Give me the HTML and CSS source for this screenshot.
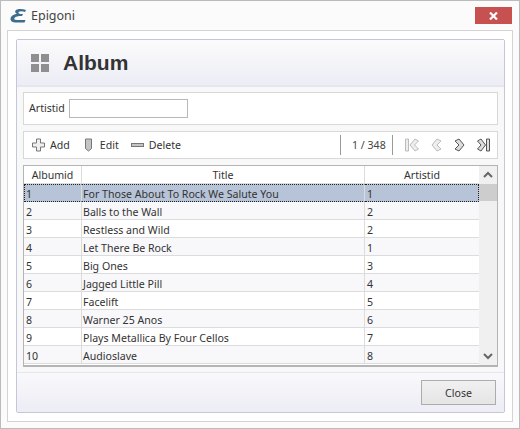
FILE: index.html
```html
<!DOCTYPE html>
<html lang="en">
<head>
    <meta charset="UTF-8">
    <title>Epigoni</title>
    <link rel="stylesheet" href="styles.css">
</head>
<body>
    <div class="window">
        <div class="titlebar">
            <svg class="app-logo" width="16" height="16" viewBox="0 0 16 16">
                <path d="M16 2 C12 0.5 7 0.5 5.5 2.5 C4.7 3.8 5.5 5.2 7 5.8 C3.5 6.3 0.5 8.5 0.5 11 C0.5 13.5 3 14.5 6 14.5 L14.5 14.5 L15.5 12 L7 12 C4.5 12 3.8 11 4.5 10 C5.5 8.5 8 8 12 8 L13 6 L10 6 C8.5 5.5 8 4.5 8.8 3.8 C10 3 13 3 15 4 Z" fill="#3d6c8c"/>
            </svg>
            <span class="app-name">Epigoni</span>
            <button class="close-x" type="button">
                <svg width="9" height="8" viewBox="0 0 9 8"><path d="M1 0.5 L8 7.5 M8 0.5 L1 7.5" stroke="#fff" stroke-width="2.2" fill="none"/></svg>
            </button>
        </div>
        <div class="client">
            <div class="card">
                <div class="card-header">
                    <span class="tiles"><i></i><i></i><i></i><i></i></span>
                    <h1>Album</h1>
                </div>
                <div class="card-body">
                    <div class="box filter">
                        <label for="artistid">Artistid</label>
                        <input type="text" id="artistid">
                    </div>
                    <div class="box toolbar">
                        <span class="tool">
                            <svg width="13" height="14" viewBox="0 0 13 14"><path d="M4.5 1 H8.5 V5 H12.5 V9 H8.5 V13 H4.5 V9 H0.5 V5 H4.5 Z" fill="#f0f0f0" stroke="#777"/></svg>
                            Add
                        </span>
                        <span class="tool">
                            <svg width="11" height="14" viewBox="0 0 11 14"><path d="M1.5 1 H7.5 V10.5 L4.5 13 L1.5 10.5 Z" fill="#c4c4c4" stroke="#777"/></svg>
                            Edit
                        </span>
                        <span class="tool">
                            <svg width="13" height="14" viewBox="0 0 13 14"><rect x="0.5" y="5.5" width="12" height="3" fill="#c4c4c4" stroke="#777"/></svg>
                            Delete
                        </span>
                        <span class="pager">
                            <span class="pos">1 / 348</span>
                            <svg width="14" height="14" viewBox="0 0 14 14"><path d="M0.5 1 H3.5 V13 H0.5 Z M10 1 L13.5 3 L9.5 7 L13.5 11 L10 13 L5 7 Z" fill="#eee" stroke="#bbb"/></svg>
                            <svg width="11" height="14" viewBox="0 0 11 14"><path d="M6 1 L10 3 L6 7 L10 11 L6 13 L1 7 Z" fill="#eee" stroke="#bbb"/></svg>
                            <svg width="11" height="14" viewBox="0 0 11 14"><path d="M5 1 L1 3 L5 7 L1 11 L5 13 L10 7 Z" fill="#ddd" stroke="#555"/></svg>
                            <svg width="13" height="14" viewBox="0 0 13 14"><path d="M4 1 L0.5 3 L4 7 L0.5 11 L4 13 L8.5 7 Z M9.5 1 H12.5 V13 H9.5 Z" fill="#ddd" stroke="#555"/></svg>
                        </span>
                    </div>
                    <div class="grid">
                        <div class="rows">
                            <table>
                                <colgroup><col class="col-id"><col class="col-title"><col class="col-artist"></colgroup>
                                <thead>
                                    <tr><th>Albumid</th><th>Title</th><th>Artistid</th></tr>
                                </thead>
                                <tbody>
                                    <tr class="selected"><td>1</td><td>For Those About To Rock We Salute You</td><td>1</td></tr>
                                    <tr><td>2</td><td>Balls to the Wall</td><td>2</td></tr>
                                    <tr><td>3</td><td>Restless and Wild</td><td>2</td></tr>
                                    <tr><td>4</td><td>Let There Be Rock</td><td>1</td></tr>
                                    <tr><td>5</td><td>Big Ones</td><td>3</td></tr>
                                    <tr><td>6</td><td>Jagged Little Pill</td><td>4</td></tr>
                                    <tr><td>7</td><td>Facelift</td><td>5</td></tr>
                                    <tr><td>8</td><td>Warner 25 Anos</td><td>6</td></tr>
                                    <tr><td>9</td><td>Plays Metallica By Four Cellos</td><td>7</td></tr>
                                    <tr><td>10</td><td>Audioslave</td><td>8</td></tr>
                                </tbody>
                            </table>
                        </div>
                        <div class="scrollbar">
                            <svg width="18" height="18" viewBox="0 0 18 18"><path d="M5 11 L9 7 L13 11" stroke="#666" stroke-width="2" fill="none"/></svg>
                            <div class="thumb"></div>
                            <svg class="down" width="18" height="18" viewBox="0 0 18 18"><path d="M5 7 L9 11 L13 7" stroke="#666" stroke-width="2" fill="none"/></svg>
                        </div>
                    </div>
                </div>
                <div class="card-footer">
                    <button class="close-btn" type="button">Close</button>
                </div>
            </div>
        </div>
    </div>
</body>
</html>
```

FILE: styles.css
```css
/* Desktop style dialog */
* {
    box-sizing: border-box;
}

body {
    margin: 0;
    font-family: "Noto Sans", Arial, sans-serif;
    font-size: 10.6px;
    color: #333;
    background-color: #fbfbfb;
}

.window {
    width: 520px;
    height: 429px;
    border: 1px solid #bbb;
    padding: 0 6px 6px 6px;
    background-color: #fbfbfb;
    display: flex;
    flex-direction: column;
}

.titlebar {
    height: 29px;
    flex-shrink: 0;
    display: flex;
    align-items: center;
    padding: 0 1px 0 3px;
}

.app-logo {
    margin-right: 5px;
}

.app-name {
    font-size: 12.5px;
    color: #444;
}

.close-x {
    margin-left: auto;
    width: 37px;
    height: 17px;
    border: none;
    padding: 0;
    background-color: #c75050;
    display: flex;
    align-items: center;
    justify-content: center;
}

.client {
    flex: 1;
    border: 1px solid #d4d4d4;
    background-color: #fff;
    padding: 8px;
    display: flex;
}

.card {
    flex: 1;
    border: 1px solid #c3c7d9;
    border-radius: 2px;
    background-color: #f8f8f8;
    display: flex;
    flex-direction: column;
}

.card-header {
    height: 47px;
    flex-shrink: 0;
    display: flex;
    align-items: center;
    padding-left: 14px;
    background: linear-gradient(#fbfbfc, #ecedf5);
    border-bottom: 2px solid #e4e6f2;
}

.tiles {
    display: grid;
    grid-template-columns: 8px 8px;
    gap: 2px;
    margin-right: 14px;
}

.tiles i {
    height: 8px;
    background-color: #8f8f8f;
}

h1 {
    margin: 0;
    font-family: "Liberation Sans", Arial, sans-serif;
    font-size: 21px;
    font-weight: bold;
    color: #333;
}

.card-body {
    flex: 1;
    padding: 5px 6px 4px 6px;
    display: flex;
    flex-direction: column;
}

.box {
    border: 1px solid #d8d8d8;
    background-color: #fff;
    display: flex;
    align-items: center;
}

.filter {
    height: 33px;
    padding-left: 5px;
    margin-bottom: 6px;
}

.filter label {
    width: 40px;
    margin-bottom: 2px;
}

.filter input {
    width: 119px;
    height: 19px;
    border: 1px solid #b8b8b8;
    margin: 0;
    outline: none;
}

.toolbar {
    height: 28px;
    padding: 0 7px 1px 8px;
    margin-bottom: 6px;
}

.tool {
    display: flex;
    align-items: center;
    gap: 5px;
    margin-right: 12px;
}

.tool:first-child {
    margin-right: 14px;
}

.pager {
    margin-left: auto;
    display: flex;
    align-items: center;
    gap: 12px;
}

.pos {
    width: 53px;
    height: 20px;
    line-height: 20px;
    padding-left: 11px;
    white-space: nowrap;
    border-left: 1px solid #999;
    border-right: 1px solid #999;
    color: #444;
}

.grid {
    height: 202px;
    border: 1px solid #b4b4b4;
    border-bottom-width: 2px;
    background-color: #fff;
    display: flex;
}

.rows {
    width: 455px;
    overflow: hidden;
}

table {
    width: 455px;
    table-layout: fixed;
    border-collapse: separate;
    border-spacing: 0;
}

.col-id {
    width: 58px;
}

.col-title {
    width: 283px;
}

th {
    height: 18px;
    padding: 1px 0 0;
    font-weight: normal;
    text-align: center;
    border-right: 1px solid #dcdcdc;
    border-bottom: 1px solid #dcdcdc;
}

td {
    height: 18px;
    padding: 2px 1px 0;
    white-space: nowrap;
    border-right: 1px solid #dcdcdc;
    border-bottom: 1px solid #dcdcdc;
}

td:first-child,
td:last-child {
    padding-left: 2px;
}

th:last-child,
td:last-child {
    border-right: none;
}

tr:nth-child(even) td {
    background-color: #f8f8fb;
}

tr.selected td {
    background-color: #b7c3d7;
    border-top: 1px dotted #222;
    border-bottom: 1px dotted #222;
    padding-top: 1px;
}

tr.selected td:first-child {
    border-left: 1px dotted #222;
    padding-left: 1px;
}

tr.selected td:last-child {
    border-right: 1px dotted #222;
}

.scrollbar {
    flex: 1;
    background-color: #f0f0f0;
    display: flex;
    flex-direction: column;
}

.thumb {
    height: 17px;
    background-color: #cdcdcd;
}

.scrollbar .down {
    margin-top: auto;
}

.card-footer {
    height: 40px;
    flex-shrink: 0;
    display: flex;
    align-items: center;
    justify-content: flex-end;
    padding-right: 8px;
    background: linear-gradient(#f9f9fb, #ecedf5);
    border-top: 1px solid #e4e6f2;
}

.close-btn {
    width: 75px;
    height: 25px;
    border: 1px solid #acacac;
    background: linear-gradient(#f0f0f0, #e5e5e5);
    font-family: inherit;
    font-size: 10.6px;
    color: #333;
}
```
